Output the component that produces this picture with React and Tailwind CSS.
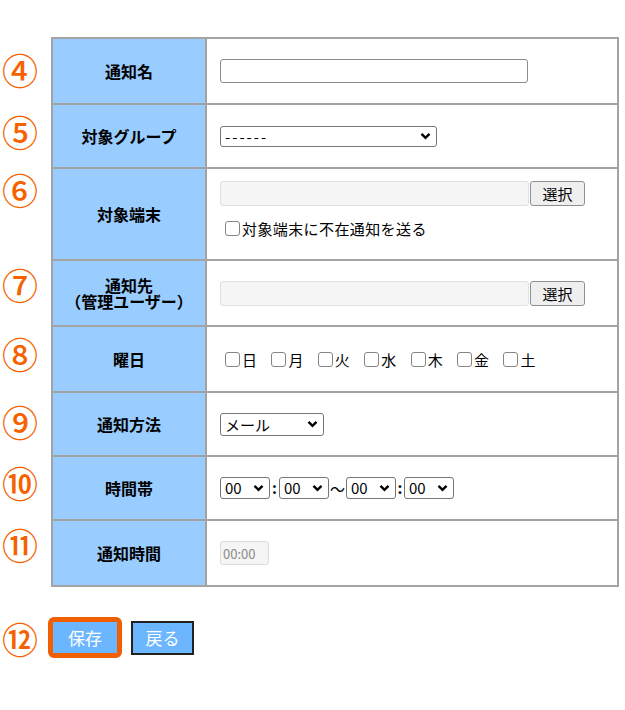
import React from 'react';

const font = { fontFamily: '"Noto Sans CJK JP", "Noto Sans", sans-serif' };

function Chevron() {
  return (
    <svg width="11" height="8" viewBox="0 0 11 8" className="pointer-events-none absolute right-[6px] top-1/2 -translate-y-1/2">
      <path d="M1.5 1.8 L5.5 5.8 L9.5 1.8" fill="none" stroke="#000" strokeWidth="2.4" />
    </svg>
  );
}

function Select({ value, className, h = 'h-[22px]', extra = '' }) {
  return (
    <div className={`relative inline-block ${className}`}>
      <select
        defaultValue={value}
        className={`${h} w-full appearance-none rounded-[3px] border border-[#767676] bg-white pl-[4px] text-[15px] leading-none text-black outline-none ${extra}`}
      >
        <option>{value}</option>
      </select>
      <Chevron />
    </div>
  );
}

function Checkbox({ label }) {
  return (
    <label className="flex items-center">
      <span className="h-[15px] w-[15px] rounded-[3px] border border-[#858585] bg-white" />
      <span className="ml-[2px] text-[15px] leading-none tracking-[0.4px] text-black">{label}</span>
    </label>
  );
}

function PickerField() {
  return (
    <div className="flex items-center">
      <input
        disabled
        className="h-[25px] w-[309px] rounded-[3px] border border-[#e0e0e0] bg-[#f5f5f5]"
      />
      <button className="ml-px h-[25px] w-[55px] rounded-[3px] border border-[#8f8f8f] bg-[#efefef] text-[15px] leading-none text-black">
        選択
      </button>
    </div>
  );
}

const rows = [
  { no: '④', top: 'pt-[14px]', h: 'h-[66px]', label: '通知名', body: (
    <input className="h-[24px] w-[308px] rounded-[3px] border border-[#8a8a8a] bg-white" />
  ) },
  { no: '⑤', top: 'pt-[10px]', h: 'h-[64px]', label: '対象グループ', body: (
    <Select value="------" className="w-[217px]" h="h-[21px]" extra="tracking-[2px]" />
  ) },
  { no: '⑥', top: 'pt-[4px]', h: 'h-[92px]', label: '対象端末', body: (
    <div className="flex flex-col gap-[15px] self-start pt-[12px]">
      <PickerField />
      <div className="pl-[5px]">
        <Checkbox label="対象端末に不在通知を送る" />
      </div>
    </div>
  ) },
  { no: '⑦', top: 'pt-[7px]', h: 'h-[66px]', label: (
    <div className="flex flex-col leading-[16px]">
      <span>通知先</span>
      <span>（管理ユーザー）</span>
    </div>
  ), body: <PickerField /> },
  { no: '⑧', top: 'pt-[10px]', h: 'h-[66px]', label: '曜日', body: (
    <div className="flex gap-[14px] pl-[5px]">
      {['日', '月', '火', '水', '木', '金', '土'].map((d) => (
        <Checkbox key={d} label={d} />
      ))}
    </div>
  ) },
  { no: '⑨', top: 'pt-[12px]', h: 'h-[64px]', label: '通知方法', body: (
    <Select value="メール" className="w-[104px]" h="h-[23px]" />
  ) },
  { no: '⑩', top: 'pt-[9px]', h: 'h-[64px]', label: '時間帯', body: (
    <div className="flex items-center text-[15px] text-black">
      <Select value="00" className="w-[50px]" />
      <span className="w-[9px] text-center font-bold">:</span>
      <Select value="00" className="w-[50px]" />
      <span className="w-[17px] text-center leading-none">～</span>
      <Select value="00" className="w-[50px]" />
      <span className="w-[8px] text-center font-bold">:</span>
      <Select value="00" className="w-[50px]" />
    </div>
  ) },
  { no: '⑪', top: 'pt-[7px]', h: 'h-[68px]', label: '通知時間', last: true, body: (
    <input
      disabled
      defaultValue="00:00"
      className="h-[24px] w-[49px] rounded-[3px] border border-[#dcdcdc] bg-[#f5f5f5] px-[2px] text-[13px] text-[#8a8a8a]"
    />
  ) },
];

export default function App() {
  return (
    <div className="min-h-[710px] w-[625px] bg-white pt-[37px]" style={font}>
      {rows.map((r, idx) => (
        <div key={idx} className="flex">
          <div className={`w-[51px] shrink-0 ${r.top} text-[36px] font-medium leading-[36px] text-[#f56200]`}>
            <span className="block w-[40px] text-center">{r.no}</span>
          </div>
          <div
            className={`flex w-[568px] border-x-2 border-t-2 border-[#a3a3a3] ${r.h} ${r.last ? 'border-b-2' : ''}`}
          >
            <div className="flex w-[154px] shrink-0 items-center justify-center border-r-2 border-[#a3a3a3] bg-[#99ccff] text-center text-[16px] font-bold text-black">
              {r.label}
            </div>
            <div className="flex flex-1 items-center pl-[13px]">{r.body}</div>
          </div>
        </div>
      ))}

      <div className="mt-[30px] flex items-center">
        <div className="w-[48px] shrink-0 text-[36px] font-medium leading-[36px] text-[#f56200]">
          <span className="block w-[40px] text-center">⑫</span>
        </div>
        <div className="rounded-[6px] border-[5px] border-[#f25f00]">
          <button className="block h-[31px] w-[64px] bg-[#6cb6ff] text-[17px] leading-none text-white">保存</button>
        </div>
        <button className="ml-[9px] h-[34px] w-[63px] border-2 border-[#222] bg-[#6cb6ff] text-[17px] leading-none text-white">
          戻る
        </button>
      </div>
    </div>
  );
}
